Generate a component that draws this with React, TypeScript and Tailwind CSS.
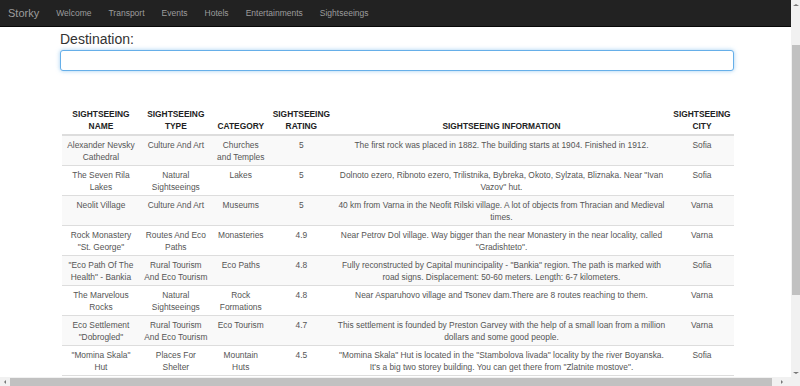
const navLinks = ["Welcome", "Transport", "Events", "Hotels", "Entertainments", "Sightseeings"];

const rows = [
  ["Alexander Nevsky Cathedral", "Culture And Art", "Churches and Temples", "5", "The first rock was placed in 1882. The building starts at 1904. Finished in 1912.", "Sofia"],
  ["The Seven Rila Lakes", "Natural Sightseeings", "Lakes", "5", "Dolnoto ezero, Ribnoto ezero, Trilistnika, Bybreka, Okoto, Sylzata, Bliznaka. Near \"Ivan Vazov\" hut.", "Sofia"],
  ["Neolit Village", "Culture And Art", "Museums", "5", "40 km from Varna in the Neofit Rilski village. A lot of objects from Thracian and Medieval times.", "Varna"],
  ["Rock Monastery \"St. George\"", "Routes And Eco Paths", "Monasteries", "4.9", "Near Petrov Dol village. Way bigger than the near Monastery in the near locality, called \"Gradishteto\".", "Varna"],
  ["\"Eco Path Of The Health\" - Bankia", "Rural Tourism And Eco Tourism", "Eco Paths", "4.8", "Fully reconstructed by Capital munincipality - \"Bankia\" region. The path is marked with\nroad signs. Displacement: 50-60 meters. Length: 6-7 kilometers.", "Sofia"],
  ["The Marvelous Rocks", "Natural Sightseeings", "Rock Formations", "4.8", "Near Asparuhovo village and Tsonev dam.There are 8 routes reaching to them.", "Varna"],
  ["Eco Settlement \"Dobrogled\"", "Rural Tourism And Eco Tourism", "Eco Tourism", "4.7", "This settlement is founded by Preston Garvey with the help of a small loan from a million dollars and some good people.", "Varna"],
  ["\"Momina Skala\" Hut", "Places For Shelter", "Mountain Huts", "4.5", "\"Momina Skala\" Hut is located in the \"Stambolova livada\" locality by the river Boyanska. It's a big two storey building. You can get there from \"Zlatnite mostove\".", "Sofia"],
];

const cols = [
  "w-[78px] px-[5px]",
  "w-[72px] px-[3px]",
  "w-[58px] px-[3px]",
  "w-[56px] px-[3px]",
  "w-[340px] px-[2px]",
  "w-[64px] px-[3px]",
];
const headers = [
  ["SIGHTSEEING", "NAME"],
  ["SIGHTSEEING", "TYPE"],
  ["CATEGORY"],
  ["SIGHTSEEING", "RATING"],
  ["SIGHTSEEING INFORMATION"],
  ["SIGHTSEEING", "CITY"],
];

export default function App() {
  return (
    <div className="w-[800px] h-[386px] overflow-hidden flex bg-white font-['Liberation_Sans',Arial,sans-serif] text-[#333]">
      <div className="w-[791px] h-full flex flex-col">
        <nav className="h-[27px] shrink-0 bg-[#222] border-b border-[#080808] flex items-center">
          <span className="ml-[8px] text-[11px] text-[#9d9d9d]">Storky</span>
          <div className="flex ml-[17px] gap-[17px]">
            {navLinks.map((l) => (
              <span key={l} className="text-[8.5px] text-[#9d9d9d]">
                {l}
              </span>
            ))}
          </div>
        </nav>

        <div className="flex-1 overflow-hidden">
          <div className="ml-[60px] w-[674px]">
            <div className="mt-[2px] text-[14px] leading-[20px] text-[#333]">Destination:</div>
            <div className="mt-[1px] h-[21px] w-[674px] rounded-[3px] border border-[#66afe9] shadow-[0_0_4px_rgba(102,175,233,0.6)] bg-white" />

            <table className="mt-[37px] ml-[2px] border-collapse table-fixed text-[8.4px] leading-[12px]">
              <thead>
                <tr className="border-b-2 border-[#ddd]">
                  {headers.map((h, i) => (
                    <th key={i} className={`${cols[i]} align-bottom font-bold text-center pb-[2px] text-[#222]`}>
                      {h.map((t) => (
                        <div key={t}>{t}</div>
                      ))}
                    </th>
                  ))}
                </tr>
              </thead>
              <tbody>
                {rows.map((r, ri) => (
                  <tr key={ri} className={`h-[30px] border-b border-[#ddd] ${ri % 2 === 0 ? "bg-[#f9f9f9]" : "bg-white"}`}>
                    {r.map((c, ci) => (
                      <td key={ci} className={`${cols[ci]} align-top text-center whitespace-pre-line pt-[3px] pb-[2px] text-[#555]`}>
                        {c}
                      </td>
                    ))}
                  </tr>
                ))}
              </tbody>
            </table>
          </div>
        </div>

        <div className="h-[9px] shrink-0 bg-[#f1f1f1] flex items-center">
          <div className="w-[9px] flex justify-center">
            <div className="w-0 h-0 border-y-[2px] border-y-transparent border-r-[2px] border-r-[#777]" />
          </div>
          <div className="ml-[1px] w-[762px] h-[8px] bg-[#c1c1c1]" />
          <div className="flex-1 flex justify-center">
            <div className="w-0 h-0 border-y-[2px] border-y-transparent border-l-[2px] border-l-[#777]" />
          </div>
        </div>
      </div>

      <div className="w-[9px] h-full bg-[#f1f1f1] flex flex-col items-center">
        <div className="h-[9px] flex items-center">
          <div className="w-0 h-0 border-x-[3px] border-x-transparent border-b-[2px] border-b-[#777]" />
        </div>
        <div className="mt-[36px] w-[8px] ml-[1px] h-[250px] bg-[#c1c1c1]" />
        <div className="flex-1" />
        <div className="h-[9px] mb-[9px] flex items-center">
          <div className="w-0 h-0 border-x-[3px] border-x-transparent border-t-[2px] border-t-[#777]" />
        </div>
      </div>
    </div>
  );
}
